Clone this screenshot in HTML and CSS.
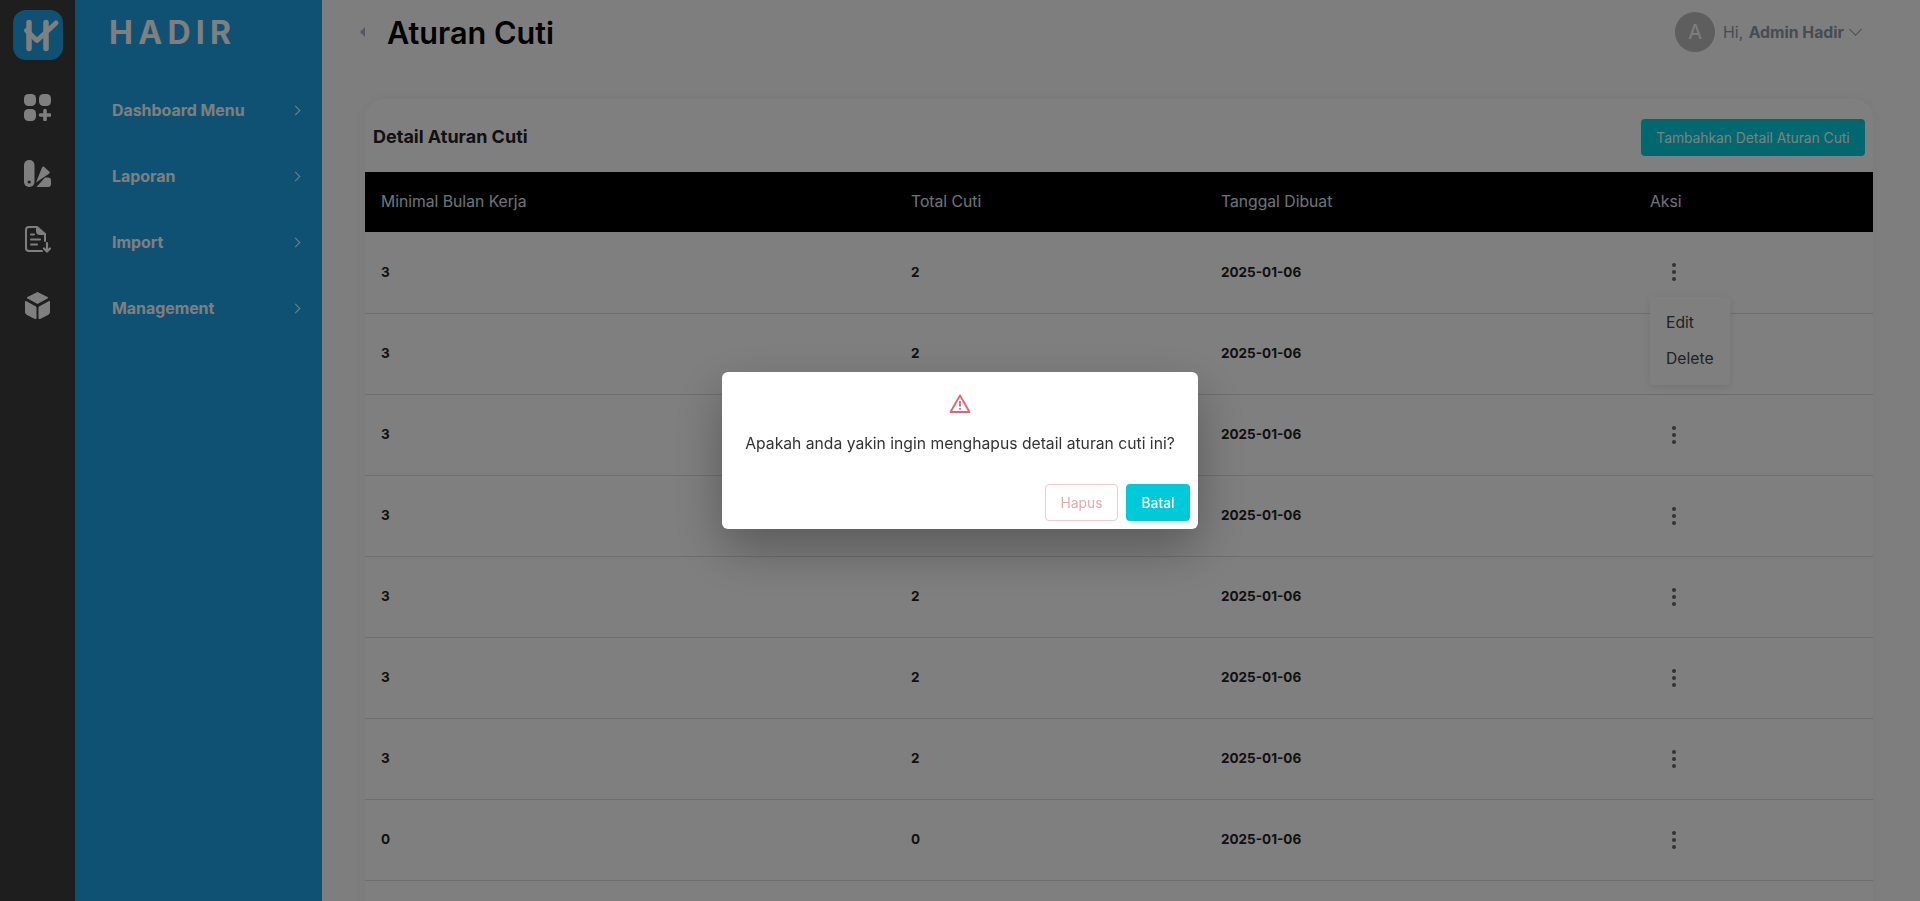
FILE: index.html
```html
<!DOCTYPE html>
<html lang="en">
<head>
  <meta charset="UTF-8">
  <meta name="viewport" content="width=device-width, initial-scale=1.0">
  <title>Aturan Cuti</title>
  <link rel="stylesheet" href="styles.css">
</head>
<body>

  <nav class="rail">
    <div class="rail-logo">
      <svg width="50" height="50" viewBox="0 0 50 50" fill="none" stroke="#fff" stroke-linecap="round" stroke-linejoin="round">
        <path d="M16 12.500v26M33 12.500v26" stroke-width="5.500"/>
        <path d="M13.500 20.500l10.500 10L43 13" stroke-width="5"/>
      </svg>
    </div>
    <svg class="rail-icon" viewBox="0 0 27 27" fill="#fff">
      <rect width="12" height="12" rx="4.500"/>
      <rect x="15" width="12" height="12" rx="4.500"/>
      <rect y="15" width="12" height="12" rx="4.500"/>
      <path d="M21 16.500v9M16.500 21h9" stroke="#fff" stroke-width="3.600" stroke-linecap="round"/>
    </svg>
    <svg class="rail-icon" viewBox="0 0 27 27" fill="#fff">
      <rect width="10.500" height="27" rx="5"/>
      <circle cx="5.200" cy="22" r="1.600" fill="#3c3c3c"/>
      <path d="M12 22.500l6-15c.4-1 1.400-1.300 2.200-.6l5 4.600c.8.700.6 1.600-.2 2.200z"/>
      <path d="M12.500 27l8.500-9.500h3c2 0 3 1 3 3V24c0 2-1 3-3 3z"/>
    </svg>
    <svg class="rail-icon" viewBox="0 0 27 27" fill="none" stroke="#fff" stroke-width="2" stroke-linecap="round" stroke-linejoin="round">
      <path d="M18 25H5c-2 0-3-1-3-3V4c0-2 1-3 3-3h8l8 7v7"/>
      <path d="M13 1.500V5c0 2 1 3 3 3h4.500" fill="#fff"/>
      <path d="M7 8.500h3M7 13.500h9M7 18.500h6"/>
      <path d="M23 17v8M20 22.500l3 3 3-3" stroke-width="2.200"/>
    </svg>
    <svg class="rail-icon" viewBox="0 0 27 27" fill="#fff">
      <path d="M13.500 0l10 5c.8.400.8 1.200 0 1.600l-10 5.400-10-5.400c-.8-.4-.8-1.200 0-1.600z"/>
      <path d="M2 9l9.500 5.200c.8.400 1 1 1 1.800v10c0 1-.8 1.300-1.600.9L3 23c-1.500-.8-2-1.800-2-3.200V9.800c0-.8.400-1.100 1-.8z"/>
      <path d="M25 9l-9.500 5.200c-.8.400-1 1-1 1.800v10c0 1 .8 1.300 1.600.9L24 23c1.500-.8 2-1.800 2-3.200V9.800c0-.8-.4-1.100-1-.8z"/>
    </svg>
  </nav>

  <aside class="sidebar">
    <div class="brand">HADIR</div>
    <ul class="menu">
      <li>Dashboard Menu <span class="menu-arrow"></span></li>
      <li>Laporan <span class="menu-arrow"></span></li>
      <li>Import <span class="menu-arrow"></span></li>
      <li>Management <span class="menu-arrow"></span></li>
    </ul>
  </aside>

  <main class="content">
    <header class="topbar">
      <span class="collapse"></span>
      <h1>Aturan Cuti</h1>
      <div class="user">
        <span class="avatar">A</span>
        <span class="user-hi">Hi,</span>
        <strong>Admin Hadir</strong>
        <span class="user-arrow"></span>
      </div>
    </header>

    <section class="card">
      <div class="card-head">
        <h2>Detail Aturan Cuti</h2>
        <button class="btn-add">Tambahkan Detail Aturan Cuti</button>
      </div>
      <table class="rules">
        <thead>
          <tr>
            <th class="col-month">Minimal Bulan Kerja</th>
            <th class="col-total">Total Cuti</th>
            <th class="col-date">Tanggal Dibuat</th>
            <th>Aksi</th>
          </tr>
        </thead>
        <tbody>
          <tr><td>3</td><td>2</td><td>2025-01-06</td><td><span class="kebab"></span></td></tr>
          <tr><td>3</td><td>2</td><td>2025-01-06</td><td><span class="kebab"></span></td></tr>
          <tr><td>3</td><td>2</td><td>2025-01-06</td><td><span class="kebab"></span></td></tr>
          <tr><td>3</td><td>2</td><td>2025-01-06</td><td><span class="kebab"></span></td></tr>
          <tr><td>3</td><td>2</td><td>2025-01-06</td><td><span class="kebab"></span></td></tr>
          <tr><td>3</td><td>2</td><td>2025-01-06</td><td><span class="kebab"></span></td></tr>
          <tr><td>3</td><td>2</td><td>2025-01-06</td><td><span class="kebab"></span></td></tr>
          <tr><td>0</td><td>0</td><td>2025-01-06</td><td><span class="kebab"></span></td></tr>
          <tr><td></td><td></td><td></td><td></td></tr>
        </tbody>
      </table>
      <div class="dropdown">
        <div>Edit</div>
        <div>Delete</div>
      </div>
    </section>
  </main>

  <div class="overlay">
    <div class="modal">
      <svg class="modal-icon" width="22" height="19" viewBox="0 0 22 19" fill="none" stroke="#e9606f" stroke-width="1.800" stroke-linejoin="round">
        <path d="M11 1.500L1.500 18h19z"/>
        <path d="M11 7v5.500M11 14v1.800"/>
      </svg>
      <p>Apakah anda yakin ingin menghapus detail aturan cuti ini?</p>
      <div class="modal-actions">
        <button class="btn-delete">Hapus</button>
        <button class="btn-cancel">Batal</button>
      </div>
    </div>
  </div>

</body>
</html>
```

FILE: styles.css
```css
* {
  margin: 0;
  padding: 0;
  box-sizing: border-box;
}

html, body {
  height: 100%;
  overflow: hidden;
}

body {
  display: flex;
  font-family: 'Inter', sans-serif;
  background: #fcfcfc;
  color: #222;
}

/* left icon rail */
.rail {
  width: 75px;
  flex: none;
  background: #3c3c3c;
  display: flex;
  flex-direction: column;
  align-items: center;
  padding-top: 10px;
}

.rail-logo {
  width: 50px;
  height: 50px;
  margin-bottom: 34px;
  background: #1ca2e4;
  border-radius: 13px;
}

.rail-icon {
  width: 27px;
  height: 27px;
  margin-bottom: 39px;
}

/* blue sidebar */
.sidebar {
  width: 247px;
  flex: none;
  background: #1ca2e4;
  color: #fff;
  padding-left: 35px;
  padding-right: 23px;
}

.brand {
  font-size: 32px;
  line-height: 34px;
  font-weight: 700;
  letter-spacing: 5.300px;
  margin-top: 16px;
  margin-bottom: 27px;
  margin-left: -1px;
}

.menu {
  list-style: none;
}

.menu li {
  height: 66px;
  display: flex;
  align-items: center;
  justify-content: space-between;
  font-size: 15.900px;
  font-weight: 700;
  padding-left: 2px;
}

.menu-arrow {
  width: 7px;
  height: 7px;
  border-top: 1.500px solid #fff;
  border-right: 1.500px solid #fff;
  transform: rotate(45deg);
}

/* main area */
.content {
  flex: 1;
  min-width: 0;
  padding: 0 47px 0 43px;
}

.topbar {
  height: 99px;
  display: flex;
  padding-top: 14px;
  align-items: flex-start;
}

.collapse {
  width: 0;
  height: 0;
  margin-top: 13px;
  margin-right: 22px;
  margin-left: -5px;
  border-top: 5px solid transparent;
  border-bottom: 5px solid transparent;
  border-right: 5px solid #a8b0c4;
}

.topbar h1 {
  font-size: 30.600px;
  line-height: 38px;
  font-weight: 600;
  color: #000;
}

.user {
  margin-left: auto;
  margin-right: 13px;
  margin-top: -2px;
  display: flex;
  align-items: center;
  gap: 8px;
  font-size: 15.800px;
  color: #8f96a8;
}

.avatar {
  width: 40px;
  height: 40px;
  border-radius: 50%;
  background: #bdbdbd;
  color: #fff;
  display: flex;
  align-items: center;
  justify-content: center;
  font-size: 20px;
}

.user-hi {
  margin-right: -2.500px;
}

.user strong {
  font-weight: 700;
}

.user-arrow {
  width: 9px;
  height: 9px;
  margin: -5px 0 0 -1px;
  border-bottom: 1.500px solid #8f96a8;
  border-right: 1.500px solid #8f96a8;
  transform: rotate(45deg);
}

.card {
  position: relative;
  background: #fff;
  border-radius: 20px 20px 0 0;
  box-shadow: 0 0 12px rgba(0,0,0,0.04);
}

.card-head {
  height: 73px;
  display: flex;
  align-items: center;
  justify-content: space-between;
  padding: 4px 8px 0;
}

.card-head h2 {
  margin-top: -2px;
  font-size: 18px;
  font-weight: 700;
  color: #222;
}

.btn-add {
  width: 224px;
  height: 37px;
  border: none;
  border-radius: 4px;
  background: #00d0dc;
  color: #fff;
  font-family: inherit;
  font-size: 13.800px;
}

.rules {
  width: 100%;
  border-collapse: collapse;
  table-layout: fixed;
}

.rules th {
  height: 60px;
  background: #000;
  color: #dfe6ea;
  font-size: 15.700px;
  font-weight: 400;
  text-align: left;
  padding: 0 0 2px 16px;
}

.col-month { width: 530px; }
.col-total { width: 310px; }
.col-date { width: 429px; }

.rules td {
  height: 81px;
  border-bottom: 1px solid #ddd;
  font-size: 13.500px;
  font-weight: 700;
  color: #222;
  padding: 0 0 1px 16px;
}

.kebab {
  display: block;
  width: 4px;
  height: 4px;
  margin: 1px 0 0 22px;
  border-radius: 50%;
  background: #666;
  box-shadow: 0 -7px 0 #666, 0 7px 0 #666;
}

/* open row menu */
.dropdown {
  position: absolute;
  left: 1285px;
  top: 198px;
  width: 80px;
  height: 88px;
  padding-top: 8px;
  background: #fff;
  border-radius: 4px;
  box-shadow: 0 2px 10px rgba(0,0,0,0.1);
  font-size: 15.700px;
  color: #444;
}

.dropdown div {
  height: 36px;
  line-height: 36px;
  padding-left: 16px;
}

/* delete confirmation */
.overlay {
  position: fixed;
  inset: 0;
  background: rgba(0,0,0,0.5);
  display: flex;
  align-items: center;
  justify-content: center;
}

.modal {
  width: 476px;
  height: 157px;
  padding-top: 22px;
  background: #fff;
  border-radius: 6px;
  box-shadow: 0 20px 50px rgba(0,0,0,0.3);
  text-align: center;
}

.modal-icon {
  display: block;
  margin: 0 auto;
}

.modal p {
  margin-top: 19px;
  font-size: 15.700px;
  line-height: 24px;
  color: #333;
}

.modal-actions {
  margin-top: 28px;
  padding-right: 8px;
  display: flex;
  justify-content: flex-end;
  gap: 8px;
}

.modal-actions button {
  height: 37px;
  border-radius: 4px;
  font-family: inherit;
  font-size: 13.800px;
}

.btn-delete {
  width: 73px;
  background: #fff;
  border: 1px solid #f3c9ce;
  color: #e3a9b2;
}

.btn-cancel {
  width: 64px;
  background: #00c9d9;
  border: none;
  color: #fff;
  font-weight: 500;
}
```
